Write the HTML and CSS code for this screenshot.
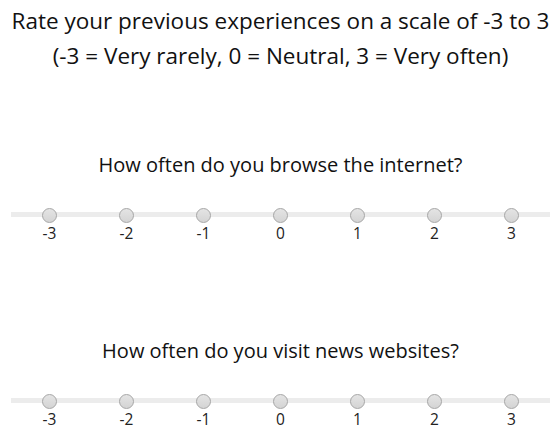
FILE: index.html
```html
<!DOCTYPE html>
<html>
<head>
<meta charset="utf-8">
<link rel="stylesheet" href="styles.css">
</head>
<body>
<div class="page">
  <h1 class="title">Rate your previous experiences on a scale of -3 to 3<br>(-3 = Very rarely, 0 = Neutral, 3 = Very often)</h1>

  <section class="question">
    <p class="question-text">How often do you browse the internet?</p>
    <div class="scale">
      <label class="point"><span class="dot"></span><span class="num">-3</span></label>
      <label class="point"><span class="dot"></span><span class="num">-2</span></label>
      <label class="point"><span class="dot"></span><span class="num">-1</span></label>
      <label class="point"><span class="dot"></span><span class="num">0</span></label>
      <label class="point"><span class="dot"></span><span class="num">1</span></label>
      <label class="point"><span class="dot"></span><span class="num">2</span></label>
      <label class="point"><span class="dot"></span><span class="num">3</span></label>
    </div>
  </section>

  <section class="question">
    <p class="question-text">How often do you visit news websites?</p>
    <div class="scale">
      <label class="point"><span class="dot"></span><span class="num">-3</span></label>
      <label class="point"><span class="dot"></span><span class="num">-2</span></label>
      <label class="point"><span class="dot"></span><span class="num">-1</span></label>
      <label class="point"><span class="dot"></span><span class="num">0</span></label>
      <label class="point"><span class="dot"></span><span class="num">1</span></label>
      <label class="point"><span class="dot"></span><span class="num">2</span></label>
      <label class="point"><span class="dot"></span><span class="num">3</span></label>
    </div>
  </section>
</div>
</body>
</html>
```

FILE: styles.css
```css
html, body {
  margin: 0;
  padding: 0;
  background: #fff;
}
body {
  font-family: "Open Sans", "DejaVu Sans", sans-serif;
  color: #111;
}
.page {
  padding: 3px 8px 0 11px;
  width: 539px;
}
.title {
  margin: 0;
  font-size: 22.5px;
  font-weight: 400;
  line-height: 35px;
  text-align: center;
  white-space: nowrap;
}
.question {
  display: flex;
  flex-direction: column;
  align-items: stretch;
  padding-top: 80px;
}
.question + .question {
  padding-top: 96px;
}
.question-text {
  margin: 0;
  font-size: 20px;
  line-height: 24px;
  text-align: center;
}
.scale {
  position: relative;
  display: flex;
  margin-top: 31px;
}
.scale::before {
  content: "";
  position: absolute;
  left: 0;
  right: 0;
  top: 4px;
  height: 5px;
  background: #ececec;
}
.point {
  flex: 1;
  display: flex;
  flex-direction: column;
  align-items: center;
  position: relative;
}
.dot {
  width: 13px;
  height: 13px;
  border-radius: 50%;
  border: 1px solid #a6a6a6;
  background: linear-gradient(#e4e4e4, #d4d4d4);
}
.num {
  font-size: 15.5px;
  line-height: 20px;
  color: #222;
}
```
